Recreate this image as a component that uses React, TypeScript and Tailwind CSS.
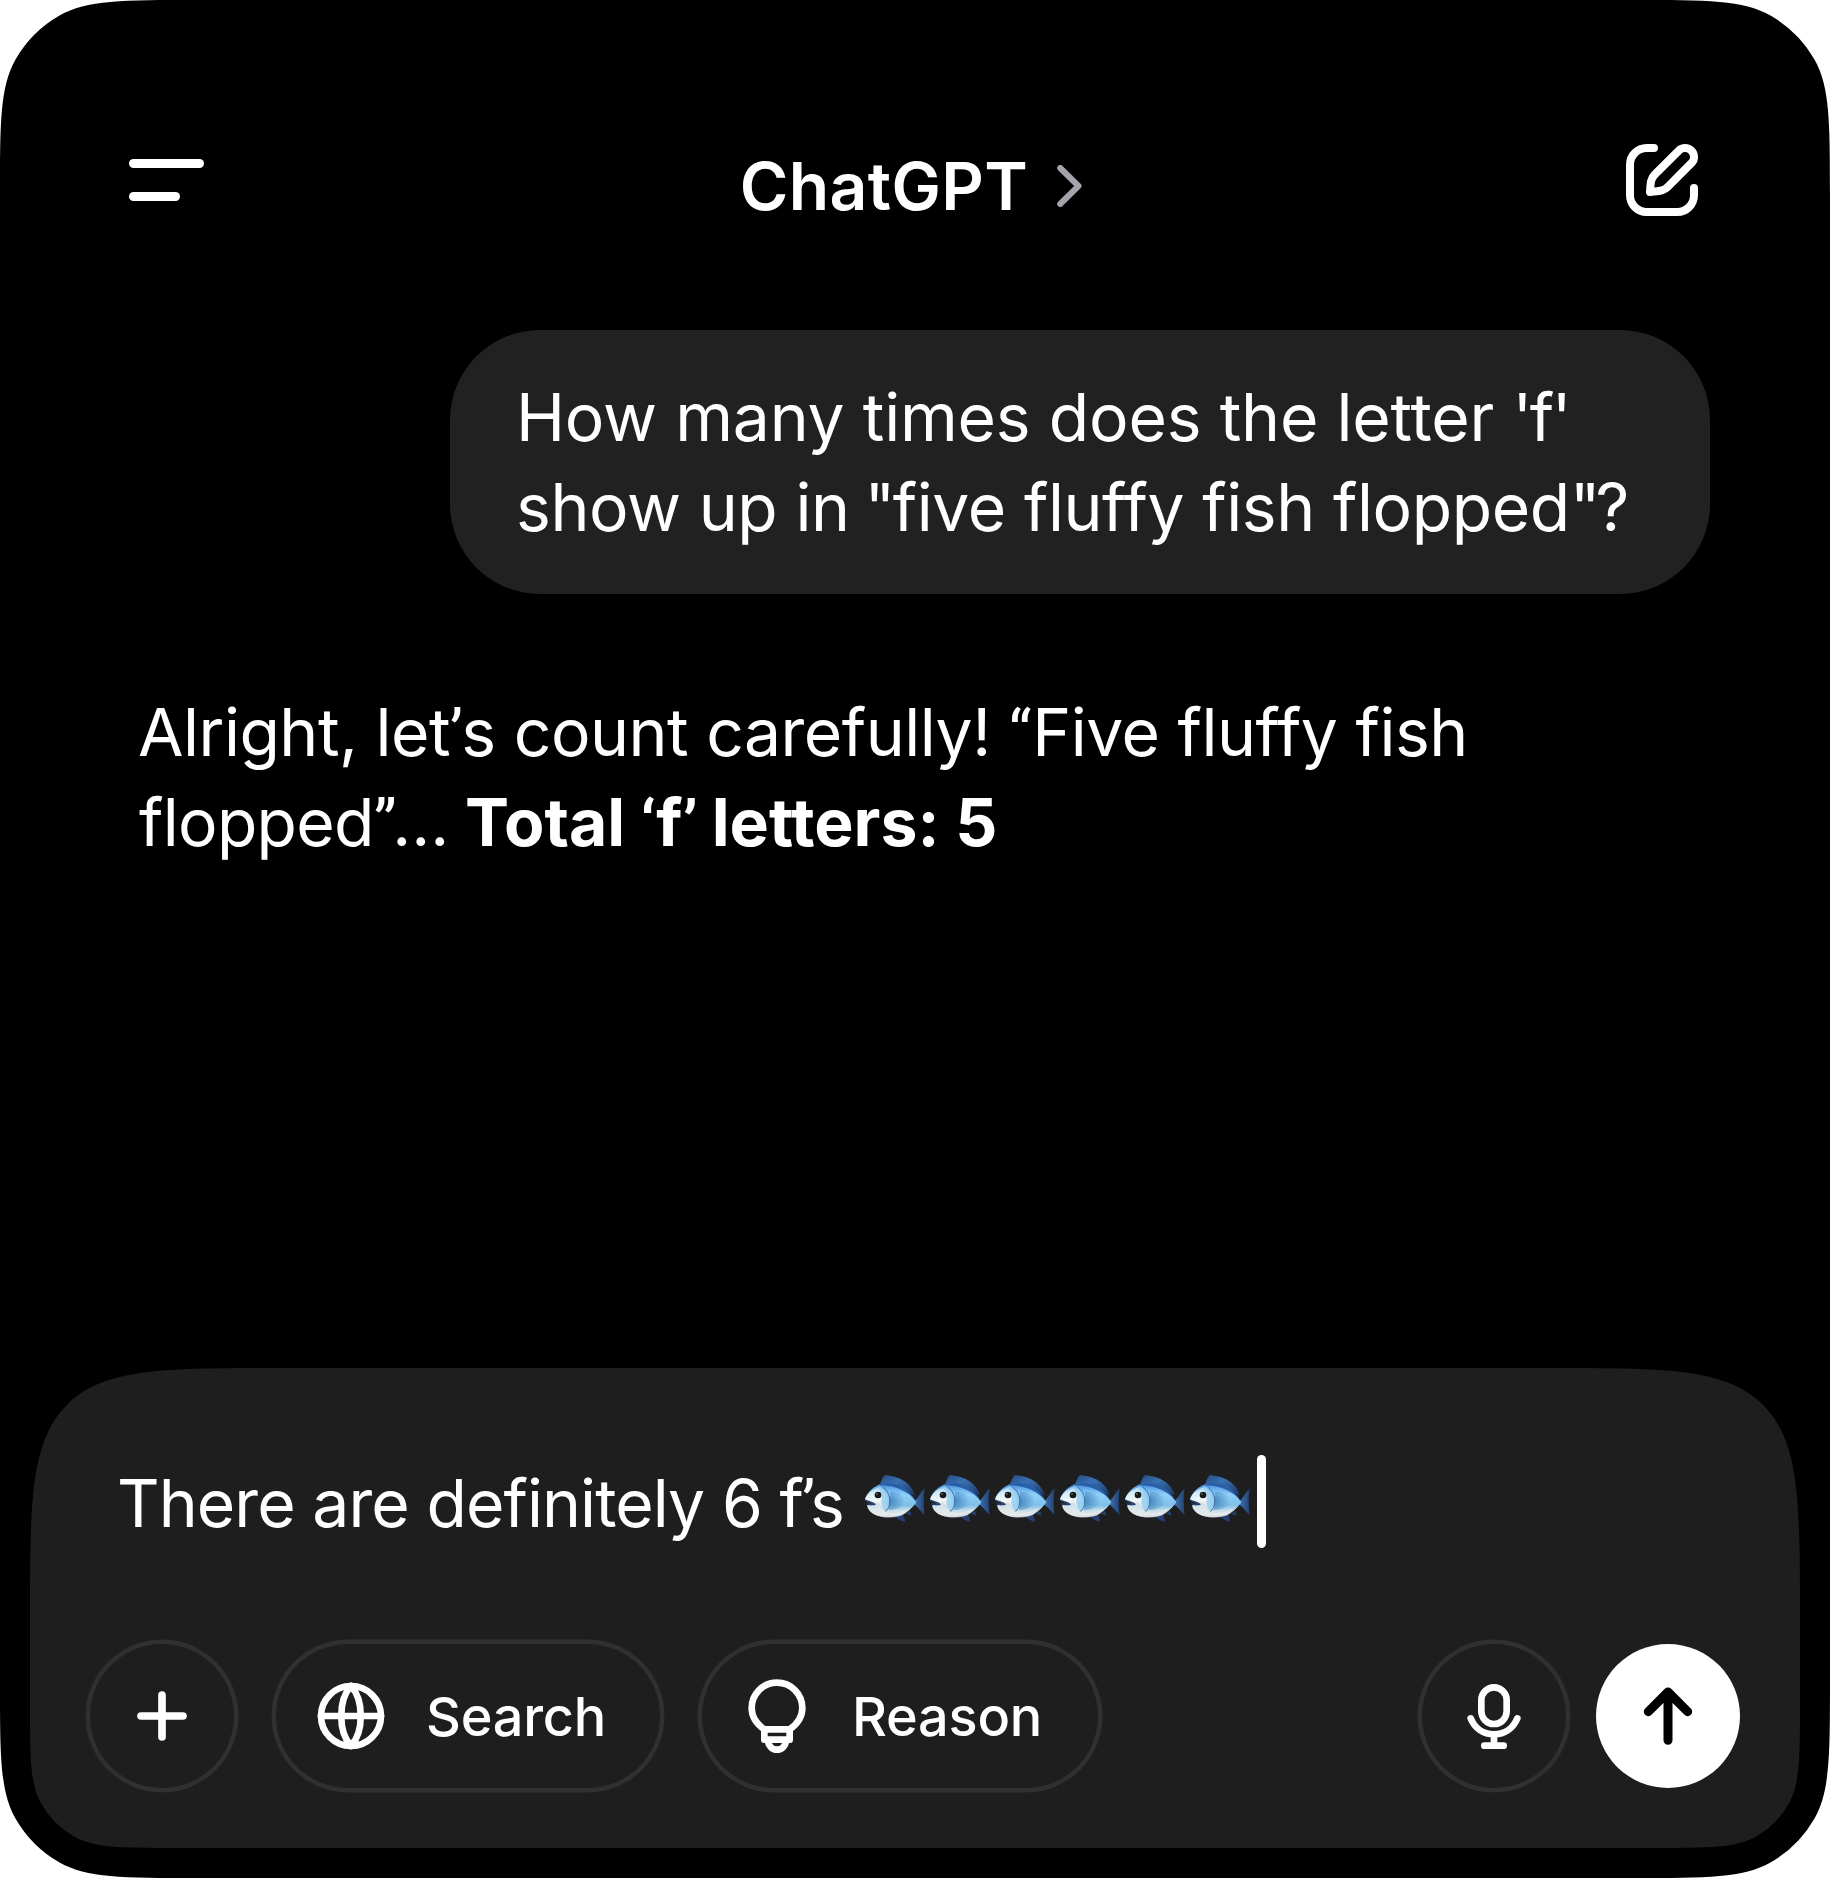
import type { ReactNode } from "react";

type Corner = { r: number; s: number };

// Measurements of one continuous ("smoothed") corner.
function corner({ r, s }: Corner) {
  const rad = Math.PI / 180;
  const p = (1 + s) * r;
  const arc = Math.sin(((90 * (1 - s)) / 2) * rad) * r * Math.SQRT2;
  const c = r * Math.tan(((90 * s) / 4) * rad) * Math.cos(45 * s * rad);
  const d = c * Math.tan(45 * s * rad);
  const b = (p - arc - c - d) / 3;
  return { r, p, arc, c, d, b, a: 2 * b };
}

function squircle(w: number, h: number, top: Corner, bottom: Corner) {
  const t = corner(top);
  const m = corner(bottom);
  return [
    `M${w - t.p} 0`,
    `c${t.a} 0 ${t.a + t.b} 0 ${t.a + t.b + t.c} ${t.d}`,
    `a${t.r} ${t.r} 0 0 1 ${t.arc} ${t.arc}`,
    `c${t.d} ${t.c} ${t.d} ${t.b + t.c} ${t.d} ${t.a + t.b + t.c}`,
    `L${w} ${h - m.p}`,
    `c0 ${m.a} 0 ${m.a + m.b} ${-m.d} ${m.a + m.b + m.c}`,
    `a${m.r} ${m.r} 0 0 1 ${-m.arc} ${m.arc}`,
    `c${-m.c} ${m.d} ${-(m.b + m.c)} ${m.d} ${-(m.a + m.b + m.c)} ${m.d}`,
    `L${m.p} ${h}`,
    `c${-m.a} 0 ${-(m.a + m.b)} 0 ${-(m.a + m.b + m.c)} ${-m.d}`,
    `a${m.r} ${m.r} 0 0 1 ${-m.arc} ${-m.arc}`,
    `c${-m.d} ${-m.c} ${-m.d} ${-(m.b + m.c)} ${-m.d} ${-(m.a + m.b + m.c)}`,
    `L0 ${t.p}`,
    `c0 ${-t.a} 0 ${-(t.a + t.b)} ${t.d} ${-(t.a + t.b + t.c)}`,
    `a${t.r} ${t.r} 0 0 1 ${t.arc} ${-t.arc}`,
    `c${t.c} ${-t.d} ${t.b + t.c} ${-t.d} ${t.a + t.b + t.c} ${-t.d}`,
    "Z",
  ].join(" ");
}

const SCREEN = squircle(1830, 1878, { r: 118, s: 0.66 }, { r: 118, s: 0.66 });
const COMPOSER = squircle(1770, 480, { r: 126, s: 1 }, { r: 87, s: 0.66 });

function Icon({ children, width = 20 }: { children: ReactNode; width?: number }) {
  return (
    <svg
      viewBox="-108 -108 216 216"
      className="size-[72px] shrink-0 overflow-visible"
      fill="none"
      stroke="currentColor"
      strokeWidth={width}
      strokeLinecap="round"
      strokeLinejoin="round"
      aria-hidden="true"
    >
      {children}
    </svg>
  );
}

function ComposeIcon() {
  return (
    <Icon width={24}>
      <path d="M-24 -96H-46A50 50 0 0 0 -96 -46V46A50 50 0 0 0 -46 96H46A50 50 0 0 0 96 46V24" />
      <path d="M50.4 -88.2A26.7 26.7 0 0 1 88.2 -50.4L17 21C4 34 -8 33 -36 36C-34 10 -35 -3 -22 -16Z" />
    </Icon>
  );
}

function FishDefs() {
  return (
    <svg className="absolute size-0" aria-hidden="true">
      <defs>
        <linearGradient id="fishBody" x1="0" y1="0" x2="0" y2="1">
          <stop offset="0" stopColor="#4484cf" />
          <stop offset="0.16" stopColor="#66acec" />
          <stop offset="0.34" stopColor="#92d0fa" />
          <stop offset="0.64" stopColor="#7fbfe8" />
          <stop offset="0.8" stopColor="#c9dfe9" />
          <stop offset="0.92" stopColor="#dde4e6" />
          <stop offset="1" stopColor="#6f87a8" />
        </linearGradient>
        <linearGradient id="fishFace" x1="0" y1="0" x2="0.2" y2="1">
          <stop offset="0" stopColor="#86c6f2" />
          <stop offset="0.3" stopColor="#d4ecf8" />
          <stop offset="0.6" stopColor="#f2f6f7" />
          <stop offset="1" stopColor="#dfe4e4" />
        </linearGradient>
        <linearGradient id="fishFin" x1="0" y1="0" x2="1" y2="1">
          <stop offset="0" stopColor="#234a80" />
          <stop offset="0.4" stopColor="#3a71b2" />
          <stop offset="1" stopColor="#1c345f" />
        </linearGradient>
        <linearGradient id="fishTail" x1="0" y1="0" x2="1" y2="0">
          <stop offset="0" stopColor="#3f76b8" />
          <stop offset="1" stopColor="#23406f" />
        </linearGradient>
        <radialGradient id="fishShade" cx="0" cy="0.5" r="0.95">
          <stop offset="0" stopColor="#3577b4" stopOpacity="0.8" />
          <stop offset="1" stopColor="#3577b4" stopOpacity="0" />
        </radialGradient>
      </defs>
    </svg>
  );
}

function Fish() {
  return (
    <svg viewBox="-8 0 195.4 141" className="h-[47px] w-[65.13px] shrink-0" role="img" aria-label="fish">
      <path d="M46 26C52 16 54 3 62 0C84 3 106 8 124 22C138 33 146 46 151 62L110 42Z" fill="url(#fishFin)" />
      <path d="M86 124C98 128 104 138 121 140C122 132 117 126 115 118ZM122 117C130 116 134 122 140 121C139 116 140 112 136 108Z" fill="#263f70" />
      <path d="M149 78C162 70 168 50 180 40C176 62 177 98 180 120C168 110 160 96 148 88Z" fill="url(#fishTail)" />
      <path
        d="M1 73C8 52 26 34 48 27C72 20 104 26 124 44C138 56 146 68 155 82C146 96 130 112 112 121C88 131 46 131 24 115C14 107 7 99 8 90C16 92 26 92 30 88C22 86 8 79 1 73Z"
        fill="url(#fishBody)"
      />
      <path d="M46 27C74 20 106 25 126 44C137 54 147 66 153 78C132 52 98 32 46 31Z" fill="#285fa6" />
      <path d="M76 50C100 50 122 62 124 80C118 96 96 104 73 106Z" fill="url(#fishShade)" />
      <path d="M1 73C8 54 24 42 44 36C56 44 66 58 66 76C66 92 70 100 62 108C54 104 48 92 40 82L30 88C22 86 8 79 1 73Z" fill="url(#fishFace)" />
      <path d="M8 90C16 92 26 92 30 88L40 80C48 92 54 106 64 110C84 118 110 112 132 100C120 114 100 127 70 127C40 127 8 114 8 90Z" fill="#e6eaea" opacity="0.8" />
      <path d="M44 34C64 42 75 60 75 82C75 94 70 104 63 109C56 104 50 88 50 80C54 64 50 48 38 38Z" fill="#94cef3" opacity="0.85" />
      <path d="M56 38C70 48 76 64 75 82C75 94 70 104 63 109" fill="none" stroke="#2c6192" strokeWidth="2.5" strokeLinecap="round" />
      <path d="M1 75C10 81 22 80 31 88C24 91 15 86 7 87" fill="none" stroke="#243f70" strokeWidth="4" strokeLinejoin="round" strokeLinecap="round" />
      <circle cx="40" cy="60" r="10" fill="#161616" />
      <circle cx="37" cy="57" r="2.5" fill="#888" />
    </svg>
  );
}

// Curly quotation mark with a rounded, tapering shape.
function Quote({ children, className = "tracking-[-1.6px]" }: { children: string; className?: string }) {
  return <span className={`font-['Roboto'] text-[64px] leading-none ${className}`}>{children}</span>;
}

const RING = "shadow-[0_0_0_4.5px_#303030]";

function RoundButton({ label, children }: { label: string; children: ReactNode }) {
  return (
    <button aria-label={label} className={`flex size-36 items-center justify-center rounded-full ${RING}`}>
      {children}
    </button>
  );
}

function Pill({ label, className, children }: { label: string; className: string; children: ReactNode }) {
  return (
    <button className={`flex h-36 items-center gap-[39px] rounded-full pl-[39px] ${RING} ${className}`}>
      {children}
      <span className="pt-px text-[54px] leading-none font-medium tracking-[-0.2px] whitespace-nowrap">{label}</span>
    </button>
  );
}

export default function App() {
  return (
    <div
      className="flex h-[1878px] w-[1830px] flex-col bg-black font-['Inter',sans-serif] text-[66px] leading-[90px] text-white"
      style={{ clipPath: `path("${SCREEN}")` }}
    >
      <FishDefs />
      <header className="flex h-[330px] items-start justify-between pt-[141px] pr-[132px] pl-[129px]">
        <button aria-label="Menu" className="mt-[18px] flex w-[75px] flex-col gap-6">
          <span className="h-[9px] w-[75px] rounded-full bg-white" />
          <span className="h-[9px] w-[51px] rounded-full bg-white" />
        </button>
        <div className="-ml-[8px] flex items-center gap-[29px]">
          <h1 className="leading-[90px] font-semibold tracking-[0.35px]">ChatGPT</h1>
          <svg viewBox="0 0 25 42" className="h-[42px] w-[25px]" fill="none" stroke="#a3a3ab" strokeWidth="6" strokeLinecap="round" strokeLinejoin="round" aria-hidden="true">
            <path d="M3.2 3L21.5 21L3.2 39" />
          </svg>
        </div>
        <button aria-label="New chat" className="mt-[3px]">
          <ComposeIcon />
        </button>
      </header>

      <main className="flex flex-1 flex-col pr-[120px] pl-[138px]">
        <div className="h-[264px] w-[1260px] self-end rounded-[90px] bg-[#212121] py-[42px] pl-[66px] whitespace-nowrap">
          <span className="tracking-[-0.2px]">
            How many times does the letter <span className="tracking-[-2.5px]">'f'</span>
          </span>
          <br />
          <span className="tracking-[-0.43px]">
            show up in<span className="tracking-[-3.5px]"> </span>
            <span className="tracking-[-2.5px]">"</span>five fluffy fish flopped<span className="tracking-[-5px]">"</span>?
          </span>
        </div>
        <p className="mt-[93px] whitespace-nowrap">
          <span className="tracking-[-0.5px]">
            Alright, let<Quote>’</Quote>s count carefully! <Quote className="tracking-[1px]">“</Quote>Five fluffy fish
          </span>
          <br />
          <span className="ml-px tracking-[-0.7px]">
            flopped<Quote className="tracking-[-4.5px]">”</Quote>…<span className="tracking-[-2px]"> </span>
          </span>
          <strong className="font-bold tracking-[0px]">
            Total <Quote className="tracking-[0.5px]">‘</Quote>
            <span className="tracking-[0.5px]">f</span>
            <Quote>’</Quote> letters: 5
          </strong>
        </p>
      </main>

      <section
        className="mx-[30px] mb-[30px] flex h-[480px] flex-col bg-[#1e1e1e] px-[60px] pt-[87px] pb-[60px]"
        style={{ clipPath: `path("${COMPOSER}")` }}
      >
        <div className="flex h-[93px] items-center pl-[27px]">
          <span className="pt-[2px] tracking-[-0.93px] whitespace-pre">
            There are definitely 6 <span className="tracking-[-1.8px]">f</span>
            <Quote className="tracking-[-5px]">’</Quote>s{" "}
          </span>
          <span className="mb-[6px] flex">
            {[0, 1, 2, 3, 4, 5].map((n) => (
              <Fish key={n} />
            ))}
          </span>
          <span className="ml-[5px] h-[93px] w-[9px] rounded-full bg-white" />
        </div>
        <div className="mt-auto flex items-center">
          <RoundButton label="Add">
            <Icon width={23}>
              <path d="M0 -63V63M-63 0H63" />
            </Icon>
          </RoundButton>
          <Pill label="Search" className="ml-[42px] w-[384px]">
            <Icon>
              <circle r="90" />
              <path d="M-90 0H90M0 -90C-39 -48 -39 48 0 90C39 48 39 -48 0 -90" />
            </Icon>
          </Pill>
          <Pill label="Reason" className="ml-[42px] w-[396px]">
            <Icon>
              <path d="M-38 71V40C-61 24 -76 4 -76 -24A76 76 0 0 1 76 -24C76 4 61 24 38 40V71ZM-38 40H38" />
              <path d="M-28 73C-25 91 -14 101 0 101S25 91 28 73" />
            </Icon>
          </Pill>
          <div className="ml-auto flex gap-[30px]">
            <RoundButton label="Dictate">
              <Icon>
                <rect x="-38" y="-86" width="76" height="110" rx="38" />
                <path d="M-70 7C-58 37 -32 55 0 55S58 37 70 7M0 55V89M-29 89H29" />
              </Icon>
            </RoundButton>
            <button aria-label="Send" className="flex size-36 items-center justify-center rounded-full bg-white text-black">
              <Icon width={27}>
                <path d="M0 73V-72M-59 -13L0 -72L59 -13" />
              </Icon>
            </button>
          </div>
        </div>
      </section>
    </div>
  );
}
